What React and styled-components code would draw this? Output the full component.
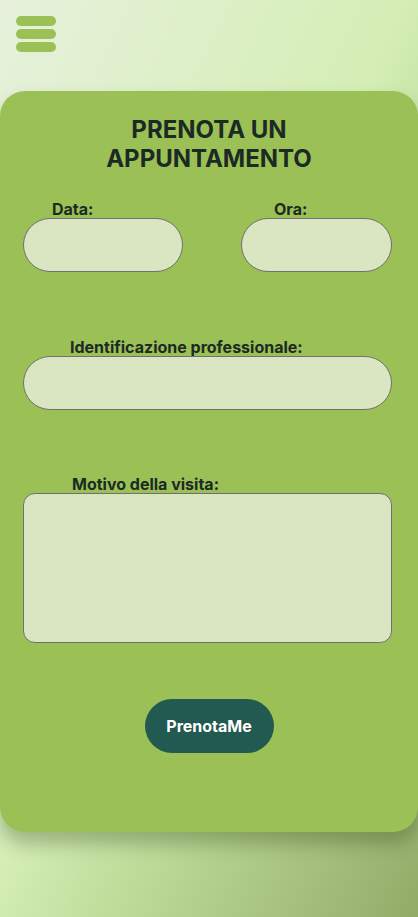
import styled, { createGlobalStyle } from "styled-components";

const GlobalStyle = createGlobalStyle`
    html, body {
        margin: 0;
        padding: 0;
    }
    body {
        font-family: Inter, "Noto Sans", sans-serif;
        background: linear-gradient(115deg, #e7f1dc 0%, #d4eeb5 48%, #bcd996 66%, #92ac68 100%);
        min-height: 917px;
    }
`;

const Page = styled.div`
    width: 418px;
    min-height: 917px;
    padding-top: 16px;
    box-sizing: border-box;
`;

const MenuButton = styled.button`
    display: flex;
    flex-direction: column;
    gap: 3px;
    margin-left: 16px;
    padding: 0;
    border: none;
    background: none;
    cursor: pointer;
`;

const MenuBar = styled.span`
    display: block;
    width: 40px;
    height: 10px;
    border-radius: 5px;
    background: #9bc055;
`;

const Card = styled.form`
    margin-top: 39px;
    height: 741px;
    box-sizing: border-box;
    background: #9bc055;
    border-radius: 25px;
    box-shadow: 0 12px 18px rgba(40, 60, 20, 0.3);
    padding: 24px 26px 0 23px;
    display: flex;
    flex-direction: column;
`;

const Title = styled.h1`
    margin: 0;
    text-align: center;
    font-size: 24px;
    line-height: 29px;
    font-weight: 700;
    color: #1b2a24;
    padding-left: 3px;
`;

const Row = styled.div`
    display: flex;
    justify-content: space-between;
    margin-top: ${(p) => p.$top}px;
`;

const Field = styled.div`
    display: flex;
    flex-direction: column;
    width: ${(p) => (p.$width ? `${p.$width}px` : "100%")};
`;

const Label = styled.label`
    font-size: 16px;
    line-height: 18px;
    font-weight: 700;
    color: #1b2a24;
    padding-left: ${(p) => p.$indent}px;
`;

const Input = styled.input`
    box-sizing: border-box;
    height: 54px;
    width: 100%;
    border: 1px solid #707070;
    border-radius: 27px;
    background: #dae5c1;
    padding: 0 20px;
    font-family: inherit;
    font-size: 15px;
    outline: none;
`;

const TextArea = styled.textarea`
    box-sizing: border-box;
    height: 150px;
    width: 100%;
    border: 1px solid #707070;
    border-radius: 12px;
    background: #dae5c1;
    padding: 12px;
    font-family: inherit;
    font-size: 15px;
    resize: none;
    outline: none;
`;

const SubmitButton = styled.button`
    align-self: center;
    margin-top: 56px;
    margin-left: 3px;
    width: 129px;
    height: 54px;
    border: none;
    border-radius: 27px;
    background: #225950;
    color: #ffffff;
    font-family: inherit;
    font-size: 16px;
    font-weight: 700;
    cursor: pointer;
`;

export default function App() {
    return (
        <>
            <GlobalStyle />
            <Page>
                <MenuButton type="button" aria-label="Menu">
                    <MenuBar />
                    <MenuBar />
                    <MenuBar />
                </MenuButton>

                <Card onSubmit={(e) => e.preventDefault()}>
                    <Title>
                        PRENOTA UN
                        <br />
                        APPUNTAMENTO
                    </Title>

                    <Row $top={27}>
                        <Field $width={160}>
                            <Label $indent={29}>Data:</Label>
                            <Input type="text" />
                        </Field>
                        <Field $width={151}>
                            <Label $indent={33}>Ora:</Label>
                            <Input type="text" />
                        </Field>
                    </Row>

                    <Row $top={66}>
                        <Field>
                            <Label $indent={47}>Identificazione professionale:</Label>
                            <Input type="text" />
                        </Field>
                    </Row>

                    <Row $top={65}>
                        <Field>
                            <Label $indent={49}>Motivo della visita:</Label>
                            <TextArea />
                        </Field>
                    </Row>

                    <SubmitButton type="submit">PrenotaMe</SubmitButton>
                </Card>
            </Page>
        </>
    );
}
